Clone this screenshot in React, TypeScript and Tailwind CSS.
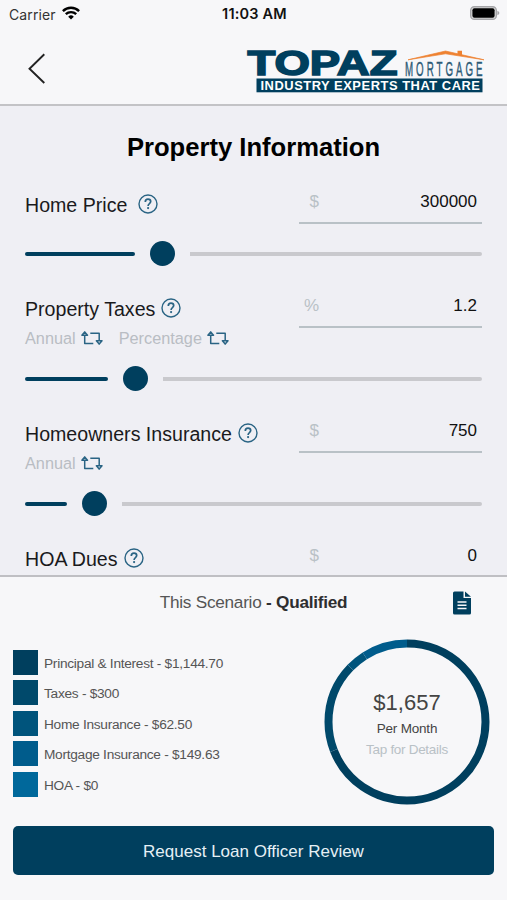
import { useState } from "react";
import type { ReactNode } from "react";

const NAVY = "#003f5e";

interface CostItem {
  label: string;
  amount: number;
  display: string;
  color: string;
}

const COSTS: CostItem[] = [
  { label: "Principal & Interest", amount: 1144.7, display: "$1,144.70", color: "#003f5e" },
  { label: "Taxes", amount: 300, display: "$300", color: "#00496b" },
  { label: "Home Insurance", amount: 62.5, display: "$62.50", color: "#00547c" },
  { label: "Mortgage Insurance", amount: 149.63, display: "$149.63", color: "#005c8c" },
  { label: "HOA", amount: 0, display: "$0", color: "#00689b" },
];

function StatusBar() {
  return (
    <div className="flex h-7 items-center justify-between pl-[9px] pr-[7px] font-['Inter',sans-serif]">
      <div className="flex w-[150px] items-center gap-1.5 text-[14px] tracking-[0.1px] text-[#333]">
        Carrier
        <svg width="18" height="14" viewBox="0 0 18 14" fill="none" stroke="#000" strokeWidth="2.4" className="mb-[2px]">
          <path d="M0.9 5.1a11.6 11.6 0 0 1 16.2 0" />
          <path d="M3.8 8.2a7.5 7.5 0 0 1 10.4 0" />
          <path d="M9 13.6L6.2 10.7a4 4 0 0 1 5.6 0z" fill="#000" stroke="none" />
        </svg>
      </div>
      <div className="text-[14.5px] font-semibold tracking-[0.2px] text-[#111]">11:03 AM</div>
      <div className="flex w-[150px] justify-end">
        <svg width="30" height="14" viewBox="0 0 30 14" className="mb-[2px]">
          <rect x="0.7" y="0.7" width="25.6" height="12.6" rx="3.6" fill="#ddd" stroke="#a5a5a8" strokeWidth="1.4" />
          <rect x="2.4" y="2.2" width="22.2" height="9.6" rx="2" fill="#000" />
          <path d="M27.4 4.8q2 .7 2 2.2t-2 2.2z" fill="#a5a5a8" />
        </svg>
      </div>
    </div>
  );
}

function Logo() {
  return (
    <svg
      width="240"
      height="46"
      viewBox="0 0 240 46"
      fontFamily="'Liberation Sans', Arial, sans-serif"
      className="overflow-visible"
    >
      <text
        x="1.5"
        y="26.2"
        fontSize="35.5"
        fontWeight="700"
        fill={NAVY}
        stroke={NAVY}
        strokeWidth="1.6"
        textLength="150"
        lengthAdjust="spacingAndGlyphs"
      >
        TOPAZ
      </text>
      <path d="M162 10.8L199.5 2L238 10.800L199.500 4.800z" fill="#ee8130" stroke="#ee8130" strokeWidth="0.7" />
      <path d="M211.500 1.700h4.500v5.300l-4.500-1.200z" fill="#ee8130" />
      <g transform="translate(159 27) scale(0.5 1)">
        <text x="0" y="0" fontSize="19.500" fill="#2c5a76" stroke="#2c5a76" strokeWidth="0.4" textLength="155" lengthAdjust="spacing">
          MORTGAGE
        </text>
      </g>
      <rect x="10.500" y="29.500" width="226" height="13.800" fill={NAVY} />
      <text
        x="14.500"
        y="40.700"
        fontSize="12"
        fontWeight="700"
        fill="#fff"
        textLength="220"
        lengthAdjust="spacingAndGlyphs"
        letterSpacing="0.500"
      >
        INDUSTRY EXPERTS THAT CARE
      </text>
    </svg>
  );
}

function HelpIcon() {
  return (
    <svg width="20" height="20" viewBox="0 0 20 20" fill="none">
      <circle cx="10" cy="10" r="9" stroke="#2a6484" strokeWidth="1.4" />
      <path d="M7.300 7.900c0-1.700 1.100-2.700 2.700-2.700s2.700 1 2.700 2.400c0 2-2.600 2-2.600 4.300" stroke="#2a6484" strokeWidth="1.700" />
      <circle cx="10.100" cy="14.100" r="1.100" fill="#2a6484" />
    </svg>
  );
}

function SwapIcon() {
  return (
    <svg width="22" height="14" viewBox="0 0 22 14" fill="none" stroke="#2a6484" strokeWidth="1.500" strokeLinejoin="round">
      <path d="M3.700 0.900L6.500 4.200H0.900z" />
      <path d="M3.700 4.200v8.300h8.600" />
      <path d="M9.300 2.300h8.900v7.500" />
      <path d="M18.200 13.100L15.400 9.800H21z" />
    </svg>
  );
}

function Toggle({ children }: { children: ReactNode }) {
  return (
    <button className="flex items-center gap-[5px] text-[16.300px] text-[#b9bdc3]">
      {children}
      <SwapIcon />
    </button>
  );
}

function Slider({ fill }: { fill: number }) {
  return (
    <div className="flex h-[25px] items-center gap-[15px]">
      <div className="h-[4px] rounded-full bg-[#003f5e]" style={{ width: fill }} />
      <div className="size-[25px] rounded-full bg-[#003f5e]" />
      <div className="h-[4px] flex-1 rounded-r-full bg-[#c9c9cd]" />
    </div>
  );
}

interface FieldProps {
  label: string;
  unit: string;
  initial: string;
  fill?: number;
  toggles?: string[];
  wide?: boolean;
}

function Field({ label, unit, initial, fill, toggles, wide }: FieldProps) {
  const [value, setValue] = useState(initial);

  return (
    <section className={`flex shrink-0 flex-col justify-between px-[25px] pb-[18px] ${toggles ? "h-[125px]" : "h-[104px]"}`}>
      <div className="flex items-start justify-between">
        <div className="pt-[10px]">
          <div className={`flex h-7 items-center text-[19.600px] text-[#1a1a1c] ${wide ? "gap-[11px]" : "gap-[6px]"}`}>
            <span className="pt-[3px]">{label}</span>
            <HelpIcon />
          </div>
          {toggles && (
            <div className="flex h-8 items-center gap-4">
              {toggles.map((t) => (
                <Toggle key={t}>{t}</Toggle>
              ))}
            </div>
          )}
        </div>
        <label className="flex h-[44px] w-[183px] items-center border-b-2 border-[#b9c1c6] pt-[2px] text-[17px]">
          <span className="w-5 text-right text-[#b9c1c6]">{unit}</span>
          <input
            value={value}
            onChange={(e) => setValue(e.target.value)}
            className="min-w-0 flex-1 bg-transparent pr-[5px] text-right text-[#111] outline-none"
          />
        </label>
      </div>
      {fill !== undefined && <Slider fill={fill} />}
    </section>
  );
}

function Donut() {
  const total = COSTS.reduce((sum, c) => sum + c.amount, 0);
  let start = 0;

  return (
    <button className="relative size-[166px]">
      <svg width="166" height="166" viewBox="0 0 166 166" fill="none" strokeWidth="8">
        <g transform="rotate(-90 83 83)">
          {COSTS.map((c) => {
            const share = (c.amount / total) * 100;
            const offset = -start;
            start += share;
            return share > 0 ? (
              <circle
                key={c.label}
                cx="83"
                cy="83"
                r="78.500"
                pathLength="100"
                stroke={c.color}
                strokeDasharray={`${share} ${100 - share}`}
                strokeDashoffset={offset}
              />
            ) : null;
          })}
        </g>
      </svg>
      <span className="absolute inset-0 flex flex-col items-center pt-[49px]">
        <span className="text-[22px] leading-[30px] text-[#444]">$1,657</span>
        <span className="text-[13.500px] leading-[22px] tracking-[-0.200px] text-[#444]">Per Month</span>
        <span className="text-[13.500px] leading-[20px] tracking-[-0.300px] text-[#b9c1c6]">Tap for Details</span>
      </span>
    </button>
  );
}

function SummaryPanel() {
  return (
    <div className="flex h-[325px] flex-col border-t-2 border-[#bfbfc3] bg-[#f7f7f9] px-[13px]">
      <div className="flex h-[52px] items-center pr-[11px]">
        <div className="w-8" />
        <div className="flex-1 pl-[9px] text-center text-[17.200px] tracking-[-0.250px] text-[#555]">
          This Scenario <b className="text-[#2e2e30]">- Qualified</b>
        </div>
        <svg width="18" height="24" viewBox="0 0 18 24" className="mr-[12px]">
          <path d="M1.500 0.500H10.500V7H18V22q0 1.500-1.500 1.500h-15Q0 23.500 0 22V2Q0 0.500 1.500 0.500z" fill={NAVY} />
          <path d="M12 0.500L18 5.800H12z" fill={NAVY} />
          <path d="M4.500 11h9M4.500 14.300h9M4.500 17.600h9" stroke="#f7f7f9" strokeWidth="1.500" />
        </svg>
      </div>
      <div className="flex h-[177px] justify-between pt-[10px]">
        <ul className="flex flex-col gap-[5.500px] pt-[10.500px]">
          {COSTS.map((c) => (
            <li key={c.label} className="flex h-[25px] items-center gap-[6px] text-[13.700px] tracking-[-0.280px] text-[#555]">
              <span className="size-[25px]" style={{ backgroundColor: c.color }} />
              <span className="pt-[4px]">{c.label} - {c.display}</span>
            </li>
          ))}
        </ul>
        <div className="pr-[4px]">
          <Donut />
        </div>
      </div>
      <button className="mt-5 h-[49px] shrink-0 rounded-[5px] bg-[#003f5e] pt-[3px] text-[17px] text-[#e6f0f5]">
        Request Loan Officer Review
      </button>
    </div>
  );
}

export default function App() {
  return (
    <div className="flex h-[900px] w-[507px] flex-col overflow-hidden bg-[#efeff4] font-['Liberation_Sans',Arial,sans-serif]">
      <header className="h-[106px] shrink-0 border-b-2 border-[#c3c3c6] bg-[#f7f7f9]">
        <StatusBar />
        <div className="flex items-start justify-between pl-[27px] pr-[21px] pt-[21px]">
          <button aria-label="Back" className="pt-1">
            <svg width="20" height="32" viewBox="0 0 20 32" fill="none" stroke="#222" strokeWidth="1.900">
              <path d="M17.300 1.300L2.500 15.700L17.300 30" />
            </svg>
          </button>
          <Logo />
        </div>
      </header>

      <main className="flex min-h-0 flex-1 flex-col overflow-hidden">
        <h1 className="h-[74px] shrink-0 pt-[25px] text-center text-[25.600px] font-bold leading-[32px] text-black">
          Property Information
        </h1>
        <Field label="Home Price" unit="$" initial="300000" fill={110} wide />
        <Field label="Property Taxes" unit="%" initial="1.2" fill={82.5} toggles={["Annual", "Percentage"]} />
        <Field label="Homeowners Insurance" unit="$" initial="750" fill={41.5} toggles={["Annual"]} />
        <Field label="HOA Dues" unit="$" initial="0" />
      </main>

      <SummaryPanel />
    </div>
  );
}
